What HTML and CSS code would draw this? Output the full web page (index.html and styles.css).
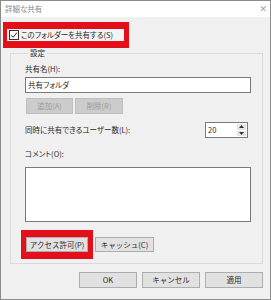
FILE: index.html
```html
<!DOCTYPE html>
<html lang="ja">
<head>
    <meta charset="UTF-8">
    <title>詳細な共有</title>
    <link rel="stylesheet" href="styles.css">
</head>
<body>
    <div class="window">
        <div class="titlebar">
            <span class="title">詳細な共有</span>
            <span class="close">✕</span>
        </div>

        <div class="mark share-mark">
            <label class="check-row">
                <span class="checkbox">
                    <svg width="8" height="8" viewBox="0 0 8 8"><path d="M1 4.2 L3.1 6.3 L7 1.6" fill="none" stroke="#222" stroke-width="1"/></svg>
                </span>
                <span>このフォルダーを共有する(S)</span>
            </label>
        </div>

        <fieldset class="group">
            <legend>設定</legend>
            <div class="lbl first">共有名(H):</div>
            <div class="textbox">共有フォルダ</div>
            <div class="btn-row">
                <button class="btn disabled add">追加(A)</button>
                <button class="btn disabled del">削除(R)</button>
            </div>
            <div class="limit-row">
                <span class="lbl">同時に共有できるユーザー数(L):</span>
                <div class="spinner">
                    <span class="spin-val">20</span>
                    <div class="spin-btns">
                        <span class="spin-btn"><svg width="5" height="3" viewBox="0 0 5 3"><path d="M0 3 L2.5 0 L5 3 Z" fill="#333"/></svg></span>
                        <span class="spin-btn"><svg width="5" height="3" viewBox="0 0 5 3"><path d="M0 0 L2.5 3 L5 0 Z" fill="#333"/></svg></span>
                    </div>
                </div>
            </div>
            <div class="lbl comment-lbl">コメント(O):</div>
            <div class="textarea"></div>
            <div class="perm-row">
                <div class="mark perm-mark">
                    <button class="btn perm">アクセス許可(P)</button>
                </div>
                <button class="btn cache">キャッシュ(C)</button>
            </div>
        </fieldset>

        <div class="footer">
            <button class="btn ok">OK</button>
            <button class="btn cancel">キャンセル</button>
            <button class="btn apply">適用</button>
        </div>
    </div>
</body>
</html>
```

FILE: styles.css
```css
body {
    margin: 0;
    padding: 0;
    background: #f0f0f0;
    font-family: "Noto Sans CJK JP", "Noto Sans", sans-serif;
    font-feature-settings: "palt";
    font-size: 7.5px;
    color: #2a2a2a;
}

.window {
    width: 271px;
    height: 300px;
    box-sizing: border-box;
    border: 1px solid #8c8c8c;
    background: #f0f0f0;
    display: flex;
    flex-direction: column;
}

.titlebar {
    height: 16px;
    background: #ffffff;
    display: flex;
    align-items: center;
    justify-content: space-between;
    padding: 0 3px 0 4px;
}

.title {
    color: #8a8a8a;
    font-size: 7.5px;
    line-height: 10px;
}

.close {
    color: #a0a0a0;
    font-family: "DejaVu Sans", sans-serif;
    font-size: 9px;
    line-height: 10px;
}

.mark {
    border-style: solid;
    border-color: #e3101c;
}

.share-mark {
    width: 117px;
    height: 12px;
    margin: 5px 0 0 2px;
    border-width: 7px 5px 7px 4px;
    background: #f4f4f4;
}

.check-row {
    display: flex;
    align-items: center;
    height: 12px;
    padding-left: 2px;
    gap: 2px;
    line-height: 10px;
}

.checkbox {
    width: 8px;
    height: 8px;
    border: 1px solid #333;
    background: #fff;
    display: flex;
}

.group {
    margin: 0 7px 0 9px;
    padding: 0 11px 4px 14px;
    border: 1px solid #dadada;
    min-width: 0;
}

.group legend {
    padding: 0 2px;
    margin-left: 3px;
    line-height: 10px;
}

.lbl {
    line-height: 10px;
}

.lbl.first {
    margin-top: 6px;
}

.textbox {
    margin-top: 3px;
    height: 14px;
    border: 1px solid #7a7a7a;
    background: #fff;
    line-height: 14px;
    padding-left: 2px;
}

.btn {
    font-family: inherit;
    font-size: 7.5px;
    color: #2a2a2a;
    background: #e1e1e1;
    border: 1px solid #adadad;
    height: 16px;
    padding: 0;
    margin: 0;
    line-height: 14px;
}

.btn-row {
    display: flex;
    gap: 2px;
    margin-top: 5px;
    padding-left: 1px;
}

.btn.disabled {
    background: #cccccc;
    border-color: #bfbfbf;
    color: #9a9a9a;
}

.add {
    width: 47px;
}

.del {
    width: 48px;
}

.limit-row {
    display: flex;
    align-items: center;
    justify-content: space-between;
    margin-top: 8px;
    padding-right: 3px;
}

.spinner {
    width: 41px;
    height: 14px;
    border: 1px solid #7a7a7a;
    background: #fff;
    display: flex;
    justify-content: space-between;
}

.spin-val {
    line-height: 14px;
    padding-left: 2px;
}

.spin-btns {
    width: 9px;
    display: flex;
    flex-direction: column;
    gap: 1px;
    padding: 1px 1px 1px 0;
}

.spin-btn {
    flex: 1;
    background: #e6e6e6;
    display: flex;
    align-items: center;
    justify-content: center;
}

.comment-lbl {
    margin-top: 11px;
}

.textarea {
    margin-top: 8px;
    height: 53px;
    border: 1px solid #7a7a7a;
    background: #fff;
}

.perm-row {
    display: flex;
    align-items: center;
    gap: 2px;
    margin-top: 8px;
    margin-left: -4px;
}

.perm-mark {
    border-width: 7px 5px 7px 5px;
    display: flex;
}

.perm {
    width: 62px;
    height: 15px;
}

.cache {
    width: 59px;
    height: 15px;
}

.footer {
    display: flex;
    justify-content: flex-end;
    gap: 5px;
    margin-top: 8px;
    padding-right: 7px;
}

.footer .btn {
    width: 58px;
    height: 16px;
}
```
